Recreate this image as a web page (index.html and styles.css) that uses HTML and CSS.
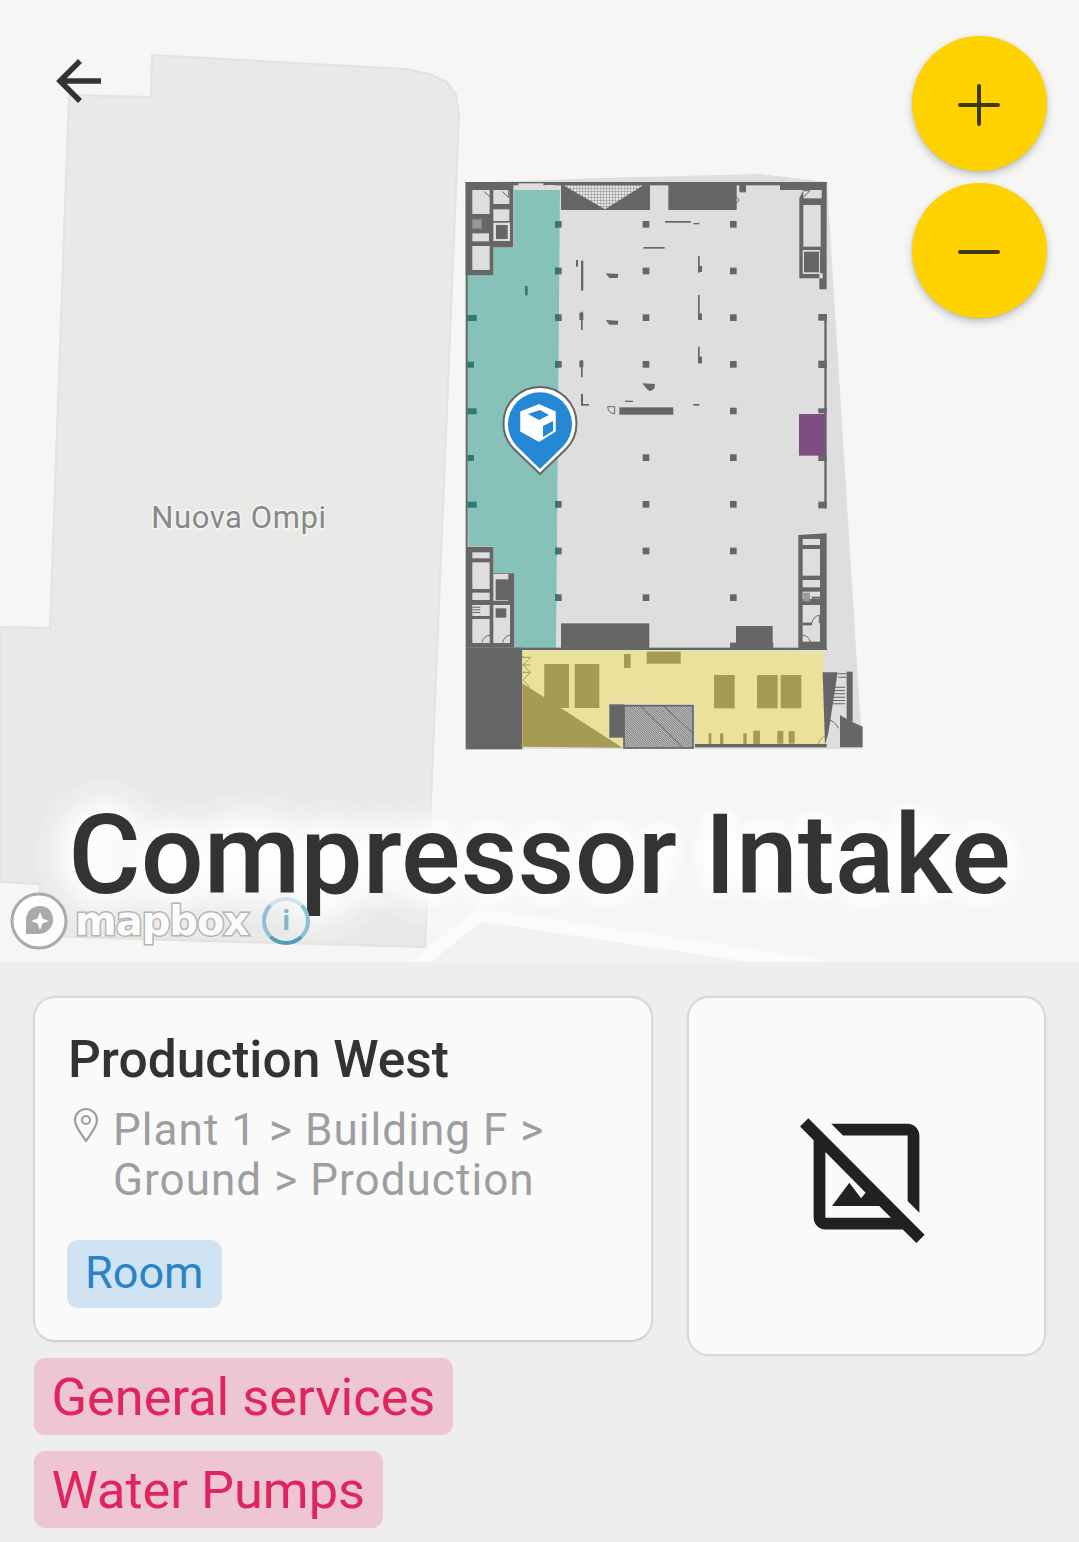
FILE: index.html
```html
<!DOCTYPE html>
<html lang="en">
<head>
<meta charset="utf-8">
<title>Compressor Intake</title>
<link rel="stylesheet" href="styles.css">
</head>
<body>
<main class="screen">
  <section class="map">
    <svg class="map-canvas" viewBox="0 0 1079 962" width="1079" height="962">
      <defs>
        <pattern id="grid" width="9" height="9" patternUnits="userSpaceOnUse"><rect width="9" height="9" fill="#e4e4e4"/><path d="M0 0H9M0 0V9" stroke="#777" stroke-width="2.500"/></pattern>
        <pattern id="diag" width="7" height="7" patternUnits="userSpaceOnUse"><rect width="7" height="7" fill="#ddd"/><path d="M-2 -2L9 9M-2 5L2 9M5 -2L9 2" stroke="#666" stroke-width="2.500"/></pattern>
      </defs>
      <rect width="1079" height="962" fill="#f6f6f4"/>
      <polygon points="69,95 151,97 152,55 405,69 430,74 447,82 456,95 459,115 425,947 204,941 172,940 40,936 40,884 0,882 0,627 50,628" fill="#e9e9e7" stroke="#e2e2e0" stroke-width="2"/>
      <path d="M415 966 480 915 820 966" fill="#f2f2f0" stroke="#fbfbfb" stroke-width="13"/>
      <text class="place-label" x="239" y="528">Nuova Ompi</text>

      <polygon points="466,183 600,178 760,174 827,182 862,745 862,749 466,749" fill="#dedede"/>

      <g transform="translate(450 170) scale(.33333)">
        <polygon points="192,60 330,60 318,1434 194,1434 194,1209 130,1209 130,1128 55,1128 50,316 130,316 130,232 192,232" fill="#86c2ba"/>
        <g fill="#666">
          <rect x="47" y="36" width="1083" height="10"/>
          <rect x="47" y="36" width="6" height="864"/>
          <polygon points="47,36 190,36 190,232 130,232 130,316 47,316"/>
          <rect x="333" y="45" width="267" height="75"/>
          <rect x="655" y="45" width="205" height="75"/>
          <rect x="868" y="45" width="20" height="22"/>
          <polygon points="990,36 1130,36 1130,358 1108,358 1108,325 1048,325 1048,85 1060,60 990,60"/>
        </g>
        <polygon points="340,46 580,46 465,118" fill="url(#grid)"/>
        <g fill="#dedede">
          <rect x="205" y="40" width="75" height="20"/>
          <rect x="285" y="45" width="30" height="15"/>
          <rect x="67" y="60" width="52" height="72"/>
          <rect x="130" y="60" width="48" height="42"/>
          <rect x="130" y="118" width="48" height="35"/>
          <rect x="67" y="190" width="50" height="24"/>
          <rect x="67" y="228" width="52" height="72"/>
          <rect x="130" y="158" width="50" height="55"/>
          <rect x="1060" y="105" width="52" height="125"/>
          <rect x="1060" y="60" width="55" height="25"/>
          <rect x="1058" y="240" width="52" height="72"/>
          <rect x="1108" y="310" width="10" height="15"/>
        </g>
        <rect x="67" y="148" width="28" height="28" fill="#999"/>
        <path d="M103 65 122 82V60M157 65 176 82V60M1060 82 1080 62H1060M845 68 868 90M845 115 868 90" fill="none" stroke="#666" stroke-width="3"/>
        <g fill="#666">
          <rect x="138" y="165" width="35" height="42"/>
          <rect x="1062" y="245" width="45" height="62"/>
          <rect x="645" y="153" width="78" height="5"/>
          <rect x="730" y="159" width="18" height="4"/>
          <rect x="580" y="231" width="64" height="5"/>
          <rect x="378" y="270" width="6" height="20"/>
          <rect x="393" y="272" width="7" height="90"/>
          <polygon points="467,310 505,312 503,324 478,324"/>
          <rect x="744" y="258" width="5" height="50"/>
          <rect x="744" y="288" width="12" height="18"/>
          <rect x="744" y="375" width="5" height="75"/>
          <rect x="744" y="430" width="12" height="20"/>
          <rect x="744" y="530" width="5" height="50"/>
          <rect x="744" y="560" width="12" height="20"/>
          <rect x="393" y="425" width="5" height="55"/>
          <rect x="388" y="428" width="12" height="22"/>
          <rect x="393" y="570" width="5" height="52"/>
          <rect x="388" y="572" width="12" height="20"/>
          <polygon points="467,450 505,452 503,464 478,464"/>
          <polygon points="577,640 615,642 613,656 600,664 590,656"/>
          <rect x="393" y="672" width="6" height="34"/>
          <rect x="393" y="702" width="24" height="5"/>
          <rect x="525" y="692" width="24" height="4"/>
          <rect x="730" y="702" width="18" height="5"/>
          <rect x="508" y="712" width="162" height="22"/>
          <rect x="1123" y="432" width="7" height="468"/>
          <rect x="1105" y="432" width="25" height="20"/>
          <rect x="1105" y="572" width="25" height="22"/>
          <rect x="1105" y="715" width="25" height="15"/>
          <rect x="1105" y="855" width="25" height="18"/>
          <rect x="315" y="153" width="20" height="20"/>
          <rect x="315" y="293" width="20" height="20"/>
          <rect x="315" y="433" width="20" height="20"/>
          <rect x="315" y="573" width="20" height="20"/>
          <rect x="578" y="153" width="20" height="20"/>
          <rect x="578" y="293" width="20" height="20"/>
          <rect x="578" y="433" width="20" height="20"/>
          <rect x="578" y="573" width="20" height="20"/>
          <rect x="578" y="853" width="20" height="20"/>
          <rect x="840" y="153" width="20" height="20"/>
          <rect x="840" y="293" width="20" height="20"/>
          <rect x="840" y="433" width="20" height="20"/>
          <rect x="840" y="573" width="20" height="20"/>
          <rect x="840" y="713" width="20" height="20"/>
          <rect x="840" y="853" width="20" height="20"/>
        </g>
        <path d="M473 710H494V731Q474 730 473 710Z" fill="none" stroke="#666" stroke-width="3"/>
        <g fill="#2f7a70">
          <rect x="315" y="153" width="10" height="20"/>
          <rect x="315" y="293" width="10" height="20"/>
          <rect x="315" y="433" width="10" height="20"/>
          <rect x="315" y="573" width="10" height="20"/>
          <rect x="225" y="348" width="8" height="28"/>
          <rect x="52" y="435" width="28" height="18"/>
          <rect x="52" y="575" width="20" height="18"/>
          <rect x="52" y="715" width="28" height="18"/>
          <rect x="52" y="855" width="20" height="18"/>
        </g>
        <rect x="1047" y="732" width="78" height="125" fill="#7d4d83"/>
      </g>

      <g transform="translate(450 470) scale(.33333)">
        <rect x="52" y="95" width="28" height="18" fill="#2f7a70"/>
        <rect x="47" y="0" width="6" height="230" fill="#666"/>
        <g fill="#666">
          <polygon points="47,230 130,230 130,310 193,310 193,533 47,533"/>
          <rect x="47" y="533" width="170" height="305"/>
          <rect x="193" y="533" width="937" height="7"/>
          <rect x="333" y="460" width="265" height="75"/>
          <rect x="858" y="468" width="110" height="65"/>
          <rect x="840" y="518" width="130" height="20"/>
          <polygon points="1045,195 1130,190 1130,540 1045,540"/>
          <rect x="1123" y="0" width="7" height="115"/>
          <rect x="1105" y="95" width="25" height="20"/>
          <rect x="315" y="93" width="20" height="20"/>
          <rect x="578" y="93" width="20" height="20"/>
          <rect x="840" y="93" width="20" height="20"/>
          <rect x="315" y="233" width="20" height="20"/>
          <rect x="578" y="233" width="20" height="20"/>
          <rect x="840" y="233" width="20" height="20"/>
          <rect x="315" y="373" width="20" height="20"/>
          <rect x="578" y="373" width="20" height="20"/>
          <rect x="840" y="373" width="20" height="20"/>
        </g>
        <g fill="#2f7a70">
          <rect x="315" y="93" width="10" height="20"/>
          <rect x="315" y="233" width="10" height="20"/>
          <rect x="315" y="373" width="10" height="20"/>
        </g>
        <g fill="#dedede">
          <rect x="67" y="247" width="52" height="18"/>
          <rect x="67" y="277" width="52" height="80"/>
          <rect x="67" y="368" width="52" height="22"/>
          <rect x="67" y="405" width="52" height="33"/>
          <rect x="67" y="447" width="52" height="72"/>
          <rect x="130" y="447" width="50" height="72"/>
          <rect x="130" y="312" width="45" height="80"/>
          <rect x="130" y="405" width="50" height="45"/>
          <rect x="1058" y="207" width="52" height="18"/>
          <rect x="1058" y="237" width="52" height="80"/>
          <rect x="1058" y="330" width="52" height="22"/>
          <rect x="1058" y="365" width="52" height="22"/>
          <rect x="1058" y="405" width="52" height="110"/>
        </g>
        <g fill="#666">
          <rect x="137" y="328" width="42" height="62"/>
          <rect x="137" y="415" width="32" height="28"/>
          <rect x="1085" y="380" width="25" height="6"/>
          <rect x="1058" y="458" width="28" height="8"/>
          <path d="M67 410h24v3h-24zM67 418h24v3h-24zM67 426h24v3h-24z"/>
        </g>
        <rect x="1060" y="368" width="20" height="26" fill="#999"/>
        <path d="M96 518Q100 498 122 495V518M158 518Q162 498 182 495V518M1058 495Q1078 498 1082 518H1058M1085 460Q1090 440 1108 435V460" fill="none" stroke="#666" stroke-width="3"/>
        <polygon points="217,540 1120,545 1122,822 735,822 733,703 478,700 478,803 517,803 517,830 217,830" fill="#e9e19c"/>
        <g fill="#a59b52">
          <rect x="283" y="582" width="74" height="132"/>
          <rect x="374" y="582" width="74" height="132"/>
          <rect x="590" y="545" width="102" height="36"/>
          <rect x="522" y="552" width="20" height="42"/>
          <rect x="792" y="615" width="62" height="100"/>
          <rect x="921" y="615" width="62" height="100"/>
          <rect x="992" y="615" width="62" height="100"/>
          <polygon points="217,640 517,833 217,830"/>
          <rect x="776" y="790" width="8" height="32"/>
          <rect x="810" y="790" width="10" height="32"/>
          <rect x="880" y="790" width="10" height="32"/>
          <rect x="910" y="782" width="20" height="40"/>
          <rect x="982" y="783" width="18" height="38"/>
          <rect x="1016" y="783" width="18" height="38"/>
        </g>
        <path d="M217 562H242L219 585 242 607 219 630 240 652" fill="none" stroke="#a59b52" stroke-width="3"/>
        <path d="M217 560H222M217 585H242M217 607H242M1105 822Q1110 804 1130 796" fill="none" stroke="#a59b52" stroke-width="3"/>
        <g fill="#666">
          <rect x="478" y="703" width="45" height="100"/>
          <rect x="735" y="822" width="395" height="10"/>
          <polygon points="1118,607 1163,607 1135,790 1125,825"/>
          <rect x="1190" y="605" width="18" height="150"/>
          <polygon points="1170,735 1205,755 1238,770 1238,832 1170,832"/>
          <path d="M1140 650h45v3h-45zM1140 660h45v3h-45zM1140 670h45v3h-45zM1140 680h45v3h-45zM1140 690h45v3h-45zM1140 700h45v3h-45zM1165 610h25v3h-25zM1165 620h25v3h-25z"/>
        </g>
        <path d="M1138 750Q1155 755 1165 775" fill="none" stroke="#666" stroke-width="3"/>
        <rect x="522" y="707" width="207" height="127" fill="url(#diag)" stroke="#666" stroke-width="5"/>
        <path d="M570 707 700 834M640 707 729 790" stroke="#666" stroke-width="3"/>
      </g>

      <g>
        <path d="M540 474 514 449A36.500 36.500 0 1 1 566 449Z" fill="#fff" stroke="#666" stroke-width="2" stroke-linejoin="round"/>
        <path d="M540 469 517 446.500A32 32 0 1 1 563 446.500Z" fill="#2488d4"/>
        <path d="M539 405 555 412V431L539 441 521 431V412Z" fill="#fff" stroke="#fff" stroke-width="1.500" stroke-linejoin="round"/>
        <path d="M528 414 540 410 549 415 539 420Z" fill="#2488d4"/>
        <path d="M543 426 553 421V431L543 437Z" fill="#2488d4"/>
      </g>
    </svg>

    <button class="back" aria-label="Back">
      <svg viewBox="0 0 50 46" width="50" height="46"><path d="M47 23H6M26 3 6 23l20 20" fill="none" stroke="#333" stroke-width="5.500"/></svg>
    </button>

    <div class="zoom-controls">
      <button class="fab" aria-label="Zoom in">
        <svg viewBox="0 0 44 44" width="44" height="44"><path d="M3 22H41M22 3V41" stroke="#3d3a14" stroke-width="4" stroke-linecap="round"/></svg>
      </button>
      <button class="fab" aria-label="Zoom out">
        <svg viewBox="0 0 44 44" width="44" height="44"><path d="M3 22H41" stroke="#3d3a14" stroke-width="4" stroke-linecap="round"/></svg>
      </button>
    </div>

    <div class="attribution">
      <svg class="mapbox-mark" viewBox="0 0 60 60" width="60" height="60">
        <circle cx="30" cy="30" r="27" fill="#fff" fill-opacity=".85" stroke="#aaa" stroke-width="3"/>
        <path d="M17 43V29C17 20 24 15 31 15 39 15 44 21 44 29 44 37 37 43 29 43Z" fill="#aaa"/>
        <path d="M31 21 33.500 27.500 40 30 33.500 32.500 31 39 28.500 32.500 22 30 28.500 27.500Z" fill="#fff"/>
      </svg>
      <span class="mapbox-word">mapbox</span>
      <span class="info-mark">i</span>
    </div>

    <h1 class="title">Compressor Intake</h1>
  </section>

  <section class="details">
    <div class="left-col">
      <article class="card place-card">
        <h2 class="place-name">Production West</h2>
        <div class="place-path">
          <svg class="path-pin" viewBox="0 0 26 36" width="26" height="36"><path d="M13 34C8 26 2 20 2 13A11 11 0 0 1 24 13C24 20 18 26 13 34Z" fill="none" stroke="#9e9e9e" stroke-width="2.200" stroke-linejoin="round"/><circle cx="13" cy="13" r="4" fill="none" stroke="#9e9e9e" stroke-width="2.200"/></svg>
          <p class="path-text">Plant 1 &gt; Building F &gt; Ground &gt; Production</p>
        </div>
        <span class="chip chip-blue">Room</span>
      </article>
      <span class="chip chip-pink">General services</span>
      <span class="chip chip-pink">Water Pumps</span>
    </div>
    <aside class="card image-card">
      <svg viewBox="0 0 24 24" width="141" height="141"><path fill="#212121" fill-rule="evenodd" d="M6 3l2 2H19V16.170l2 2V5c0-1.100-.9-2-2-2ZM20.490 23.310 18.170 21H5c-1.100 0-2-.9-2-2V5.830L.69 3.510 2.100 2.100 21.900 21.900ZM16.170 19l-2-2H6.130L9.080 13.060 11.070 15.700 11.860 14.760 5 7.830V19Z"/></svg>
    </aside>
  </section>
</main>
</body>
</html>
```
FILE: styles.css
```css
* { box-sizing: border-box; }
html, body { margin: 0; padding: 0; }
body {
  width: 1079px;
  height: 1542px;
  overflow: hidden;
  background: #eeeeee;
  font-family: Roboto, "Liberation Sans", sans-serif;
}
.screen { display: flex; flex-direction: column; height: 100%; }

.map { position: relative; height: 962px; overflow: hidden; flex: none; }
.map-canvas { display: block; }
.place-label {
  font-family: Roboto, sans-serif;
  font-size: 31px;
  letter-spacing: .6px;
  fill: #888;
  text-anchor: middle;
  paint-order: stroke;
  stroke: #f4f4f3;
  stroke-width: 3px;
}

.back {
  position: absolute;
  left: 54px;
  top: 58px;
  padding: 0;
  border: 0;
  background: none;
  line-height: 0;
}

.zoom-controls {
  position: absolute;
  right: 32px;
  top: 36px;
  display: flex;
  flex-direction: column;
  gap: 12px;
}
.fab {
  width: 135px;
  height: 135px;
  padding: 3px 2px 0 0;
  border: 0;
  border-radius: 50%;
  background: #ffd200;
  box-shadow: 0 4px 8px rgba(0,0,0,.2), 0 1px 3px rgba(0,0,0,.1);
  display: flex;
  align-items: center;
  justify-content: center;
}

.title {
  position: absolute;
  left: 0;
  right: 0;
  top: 790px;
  margin: 0;
  text-align: center;
  font-size: 111px;
  line-height: 130px;
  font-weight: 500;
  color: #333;
  white-space: nowrap;
  text-shadow: 0 0 30px #fff, 0 0 30px #fff, 0 0 40px #fff, 0 0 40px #fff, 0 0 60px #fff, 0 0 60px #fff, 0 0 60px #fff;
}

.attribution {
  position: absolute;
  left: 9px;
  top: 891px;
  display: flex;
  align-items: center;
}
.mapbox-mark { display: block; flex: none; position: relative; z-index: 1; }
.mapbox-word {
  position: relative;
  z-index: 1;
  margin-left: 6px;
  font-family: "DejaVu Sans", sans-serif;
  font-weight: 700;
  font-size: 40px;
  line-height: 60px;
  letter-spacing: -1px;
  color: #fbfbfb;
  -webkit-text-stroke: 3px #b4b4b4;
  paint-order: stroke fill;
}
.info-mark {
  position: relative;
  z-index: 1;
  margin-left: 14px;
  width: 48px;
  height: 48px;
  border-radius: 50%;
  border: 4px solid rgba(140,192,210,.35);
  border-bottom-color: #4f9fbb;
  border-left-color: #8cc0d2;
  border-right-color: #8cc0d2;
  color: #7fb8cc;
  font-family: Roboto, sans-serif;
  font-weight: 700;
  font-size: 28px;
  line-height: 40px;
  text-align: center;
}

.details {
  flex: 1;
  padding: 34px 33px 0 34px;
  display: flex;
  gap: 35px;
  align-items: flex-start;
}
.left-col {
  width: 618px;
  flex: none;
  display: flex;
  flex-direction: column;
  align-items: flex-start;
  gap: 16px;
}
.card {
  background: #fafafa;
  border: 2px solid #d8d8d8;
  border-radius: 22px;
  box-shadow: 0 0 0 1px rgba(0,0,0,.025);
}
.place-card {
  width: 620px;
  margin-left: -1px;
  flex: none;
  height: 346px;
  padding: 32px 33px 0 33px;
  border-bottom-color: #cfcfcf;
}
.place-name {
  margin: 0;
  font-size: 51.500px;
  line-height: 60px;
  font-weight: 500;
  color: #333;
}
.place-path {
  display: flex;
  gap: 14px;
  margin-top: 15px;
}
.path-pin { flex: none; margin: 2px 0 0 5px; }
.path-text {
  margin: 0;
  font-size: 44px;
  line-height: 50px;
  letter-spacing: 1.050px;
  color: #9e9e9e;
  width: 470px;
}
.chip {
  display: inline-block;
  border-radius: 11px;
}
.chip-blue {
  margin-top: 35px;
  height: 68px;
  padding: 0 18px;
  font-size: 45px;
  line-height: 66px;
  background: #cfe3f3;
  color: #2a83c6;
  margin-left: -1px;
}
.chip-pink {
  height: 77px;
  padding: 0 18px 0 17.500px;
  font-size: 52.300px;
  line-height: 78px;
  background: #edc5d3;
  color: #e0245e;
}
.image-card {
  width: 359px;
  height: 360px;
  display: flex;
  align-items: center;
  justify-content: center;
}
```
